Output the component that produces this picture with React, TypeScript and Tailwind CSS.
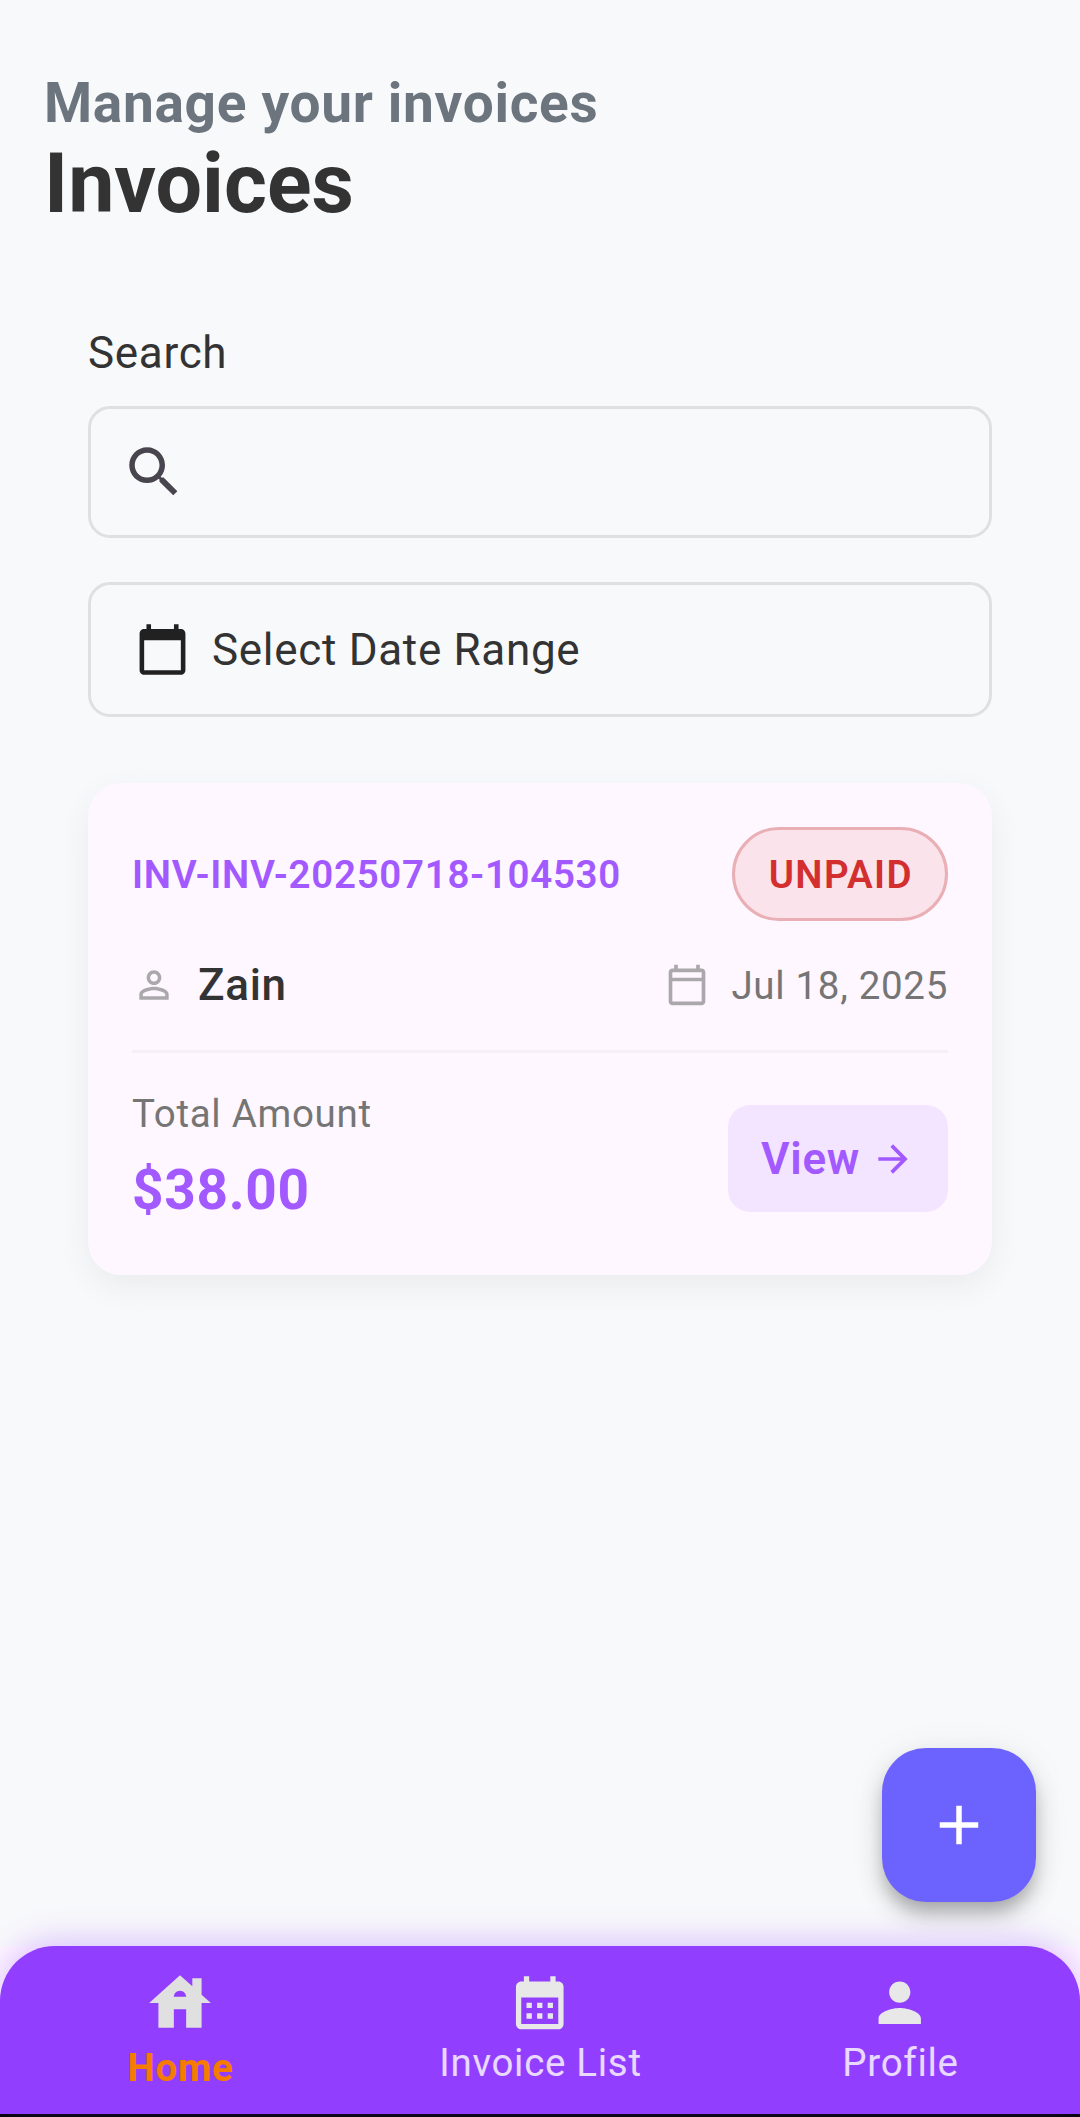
import type { ReactNode } from "react";

const paths = {
  search:
    "M15.5 14h-.79l-.28-.27C15.41 12.59 16 11.11 16 9.5 16 5.91 13.09 3 9.5 3S3 5.91 3 9.5 5.91 16 9.5 16c1.61 0 3.09-.59 4.23-1.57l.27.28v.79l5 4.99L20.49 19l-4.99-5zm-6 0C7.01 14 5 11.99 5 9.5S7.01 5 9.5 5 14 7.01 14 9.5 11.99 14 9.5 14z",
  calendarToday:
    "M20 3h-1V1h-2v2H7V1H5v2H4c-1.1 0-2 .9-2 2v16c0 1.1.9 2 2 2h16c1.1 0 2-.9 2-2V5c0-1.1-.9-2-2-2zm0 18H4V8h16v13z",
  calendarOutlined:
    "M20 3h-1V1h-2v2H7V1H5v2H4c-1.1 0-2 .9-2 2v16c0 1.1.9 2 2 2h16c1.1 0 2-.9 2-2V5c0-1.1-.9-2-2-2zm0 18H4V10h16v11zm0-13H4V5h16v3z",
  personOutline:
    "M12 5.9c1.16 0 2.1.94 2.1 2.1s-.94 2.1-2.1 2.1S9.9 9.16 9.9 8s.94-2.1 2.1-2.1m0 9c2.97 0 6.1 1.46 6.1 2.1v1.1H5.9V17c0-.64 3.13-2.1 6.1-2.1M12 4C9.79 4 8 5.79 8 8s1.79 4 4 4 4-1.79 4-4-1.79-4-4-4zm0 9c-2.67 0-8 1.34-8 4v3h16v-3c0-2.66-5.33-4-8-4z",
  arrowForward: "M12 4l-1.41 1.41L16.17 11H4v2h12.17l-5.58 5.59L12 20l8-8z",
  add: "M19 13h-6v6h-2v-6H5v-2h6V5h2v6h6v2z",
  house:
    "M19 9.3V4h-3v2.6L12 3 2 12h3v8h5v-6h4v6h5v-8h3L19 9.3zM10 10c0-1.1.9-2 2-2s2 .9 2 2h-4z",
  calendarMonth:
    "M19 4h-1V2h-2v2H8V2H6v2H5c-1.11 0-1.99.9-1.99 2L3 20a2 2 0 0 0 2 2h14c1.1 0 2-.9 2-2V6c0-1.1-.9-2-2-2zm0 16H5V10h14v10zM9 14H7v-2h2v2zm4 0h-2v-2h2v2zm4 0h-2v-2h2v2zm-8 4H7v-2h2v2zm4 0h-2v-2h2v2zm4 0h-2v-2h2v2z",
  person:
    "M12 12c2.21 0 4-1.79 4-4s-1.79-4-4-4-4 1.79-4 4 1.79 4 4 4zm0 2c-2.67 0-8 1.34-8 4v2h16v-2c0-2.66-5.33-4-8-4z",
};

function Icon({ name, className }: { name: keyof typeof paths; className: string }) {
  return (
    <svg viewBox="0 0 24 24" fill="currentColor" aria-hidden="true" className={`shrink-0 ${className}`}>
      <path d={paths[name]} />
    </svg>
  );
}

function Header() {
  return (
    <header className="px-11 pt-[71px] font-bold">
      <p className="text-[55px] leading-[64px] text-[#6c757d]">Manage your invoices</p>
      <h1 className="text-[82.5px] leading-[97px] tracking-normal text-[#333333]">Invoices</h1>
    </header>
  );
}

function Filters() {
  return (
    <section className="mt-[95px] px-[88px] text-[44px] leading-[52px] text-[#333333]">
      <label htmlFor="search" className="block">
        Search
      </label>
      <div className="mt-[27px] flex h-[132px] items-center rounded-[22px] border-[3px] border-[#e0e0e0] pl-[30px]">
        <Icon name="search" className="size-[66px] text-[#49454f]" />
        <input id="search" className="ml-4 h-full min-w-0 flex-1 bg-transparent outline-none" />
      </div>
      <button className="mt-11 flex h-[135px] w-full items-center gap-[22px] rounded-[22px] border-[3px] border-[#e0e0e0] pl-[44px]">
        <Icon name="calendarToday" className="size-[55px] text-[#212121]" />
        <span>Select Date Range</span>
      </button>
    </section>
  );
}

function InvoiceCard() {
  return (
    <article className="mx-[88px] mt-[66px] h-[492px] rounded-[33px] bg-[#fef7ff] p-11 shadow-[0_11px_34px_rgba(0,0,0,0.06)]">
      <div className="flex h-[94px] items-center justify-between">
        <h2 className="pt-0.5 text-[38.5px] leading-[46px] font-semibold text-[#a259ff]">INV-INV-20250718-104530</h2>
        <span className="flex h-[94px] items-center rounded-full border-[3px] border-[#eaafb5] bg-[#fae3ea] pt-0.5 pr-[32px] pl-[34px] text-[38.5px] leading-[46px] font-semibold tracking-[1.375px] text-[#d32f2f]">
          UNPAID
        </span>
      </div>
      <div className="mt-[38px] flex h-[52px] items-center justify-between">
        <div className="flex items-center gap-[22px]">
          <Icon name="personOutline" className="size-11 text-[#aba8ac]" />
          <span className="text-[44px] leading-[52px] font-medium text-[#333333]">Zain</span>
        </div>
        <div className="flex items-center gap-[22px]">
          <Icon name="calendarOutlined" className="size-11 text-[#aba8ac]" />
          <span className="pt-0.5 text-[38.5px] leading-[46px] text-[#757575]">Jul 18, 2025</span>
        </div>
      </div>
      <hr className="mt-[39px] h-[3px] border-0 bg-[#f5f0f6]" />
      <div className="mt-[33px] flex h-[145px] items-center justify-between">
        <div className="h-full pt-[5px]">
          <p className="text-[38.5px] leading-[46px] text-[#757575]">Total Amount</p>
          <p className="mt-[21px] text-[55px] leading-[64px] font-bold text-[#a259ff]">$38.00</p>
        </div>
        <button className="flex h-[107px] w-[220px] items-center justify-between rounded-[22px] bg-[#f3e5ff] px-[33px] text-[#a259ff]">
          <span className="text-[44px] leading-[52px] font-semibold">View</span>
          <Icon name="arrowForward" className="size-11" />
        </button>
      </div>
    </article>
  );
}

function NavItem({ label, icon, active = false }: { label: string; icon: ReactNode; active?: boolean }) {
  return (
    <button
      className={
        active
          ? "flex flex-1 flex-col items-center gap-[5px] pt-5 font-bold text-[#f57c00]"
          : "flex flex-1 flex-col items-center gap-[5px] pt-[25px] text-white/80"
      }
    >
      {icon}
      <span className="pl-px text-[38.5px] leading-[46px]">{label}</span>
    </button>
  );
}

function BottomNav() {
  return (
    <div className="border-b-[3px] border-black bg-[#fef7ff]">
      <nav className="flex h-[168px] items-start rounded-t-[55px] bg-[#923eff] shadow-[0_-5px_32px_rgba(146,62,255,0.3)]">
        <NavItem active label="Home" icon={<Icon name="house" className="size-[74px] text-[#e0e0e0]" />} />
        <NavItem label="Invoice List" icon={<Icon name="calendarMonth" className="size-[63.5px] text-[#e8e8e8]" />} />
        <NavItem label="Profile" icon={<Icon name="person" className="size-[63.5px] text-[#e8e8e8]" />} />
      </nav>
    </div>
  );
}

export default function App() {
  return (
    <div className="flex h-[2117px] w-[1080px] flex-col overflow-hidden bg-[#f8f9fb] font-[Roboto,sans-serif] tracking-[0.6875px]">
      <Header />
      <Filters />
      <InvoiceCard />
      <button
        aria-label="Add invoice"
        className="mt-auto mr-11 mb-11 flex size-[154px] items-center justify-center self-end rounded-[44px] bg-[#6c63ff] text-white shadow-[0_12px_16px_-3px_rgba(0,0,0,0.2),0_14px_27px_rgba(0,0,0,0.14),0_3px_40px_rgba(0,0,0,0.06)]"
      >
        <Icon name="add" className="size-[66px]" />
      </button>
      <BottomNav />
    </div>
  );
}
